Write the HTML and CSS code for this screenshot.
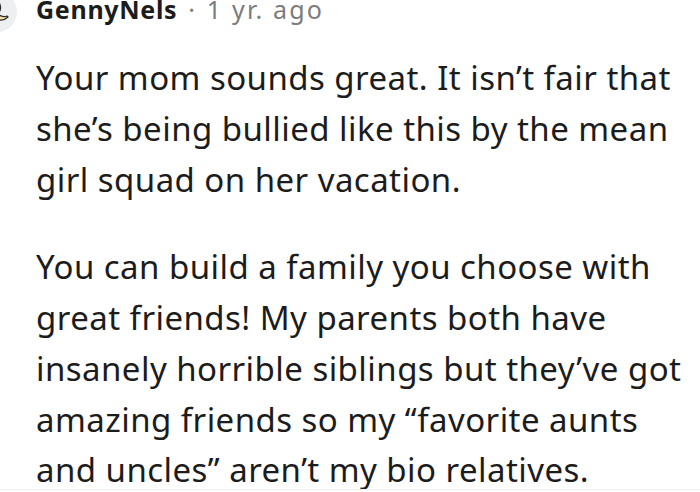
FILE: index.html
```html
<!DOCTYPE html>
<html>
<head>
<meta charset="utf-8">
<link rel="stylesheet" href="styles.css">
</head>
<body>
<div class="comment">
  <div class="avatar">
    <svg width="40" height="40" viewBox="0 0 40 40">
      <circle cx="20" cy="20" r="20" fill="#edeff1"/>
      <path d="M0 4 Q14 2 22 10 Q26 18 20 22 Q27 26 30 24 L31 25 Q26 30 19 27 Q16 34 18 40 L0 40 Z" fill="#f3dfa6" stroke="#2a2a2a" stroke-width="1.2"/>
      <path d="M22 10 Q20 16 14 18" fill="none" stroke="#d9c48a" stroke-width="1"/>
    </svg>
  </div>
  <div class="meta"><span class="user">GennyNels</span><span class="dot">·</span><span class="time">1 yr. ago</span></div>
  <div class="body">
    <p>Your mom sounds great. It isn’t fair that she’s being bullied like this by the mean girl squad on her vacation.</p>
    <p>You can build a family you choose with great friends! My parents both have insanely horrible siblings but they’ve got amazing friends so my “favorite aunts and uncles” aren’t my bio relatives.</p>
  </div>
</div>
</body>
</html>
```
FILE: styles.css
```css
html, body {
  margin: 0;
  padding: 0;
  background: #ffffff;
}
body {
  width: 700px;
  height: 492px;
  overflow: hidden;
  font-family: "Noto Sans", "Open Sans", sans-serif;
  color: #1c1c1c;
}
.comment {
  position: relative;
  height: 489px;
  overflow: hidden;
  border-bottom: 1px solid #edeff1;
}
.avatar {
  position: absolute;
  left: -23px;
  top: -8px;
  width: 40px;
  height: 40px;
}
.avatar svg {
  display: block;
}
.meta {
  padding-left: 36px;
  height: 30px;
  margin-top: -6px;
  font-size: 25px;
  line-height: 30px;
  letter-spacing: 0.7px;
  display: flex;
  align-items: baseline;
  white-space: nowrap;
}
.user {
  font-weight: 700;
  color: #1c1c1c;
}
.dot {
  color: #7c7c7c;
  margin: 0 11px 0 11px;
}
.time {
  color: #7c7c7c;
  letter-spacing: 2.2px;
}
.body {
  padding: 29px 8px 0 36px;
  font-size: 33px;
  line-height: 50.75px;
  letter-spacing: 0.45px;
}
.body p {
  margin: 0 0 37px 0;
}
```
